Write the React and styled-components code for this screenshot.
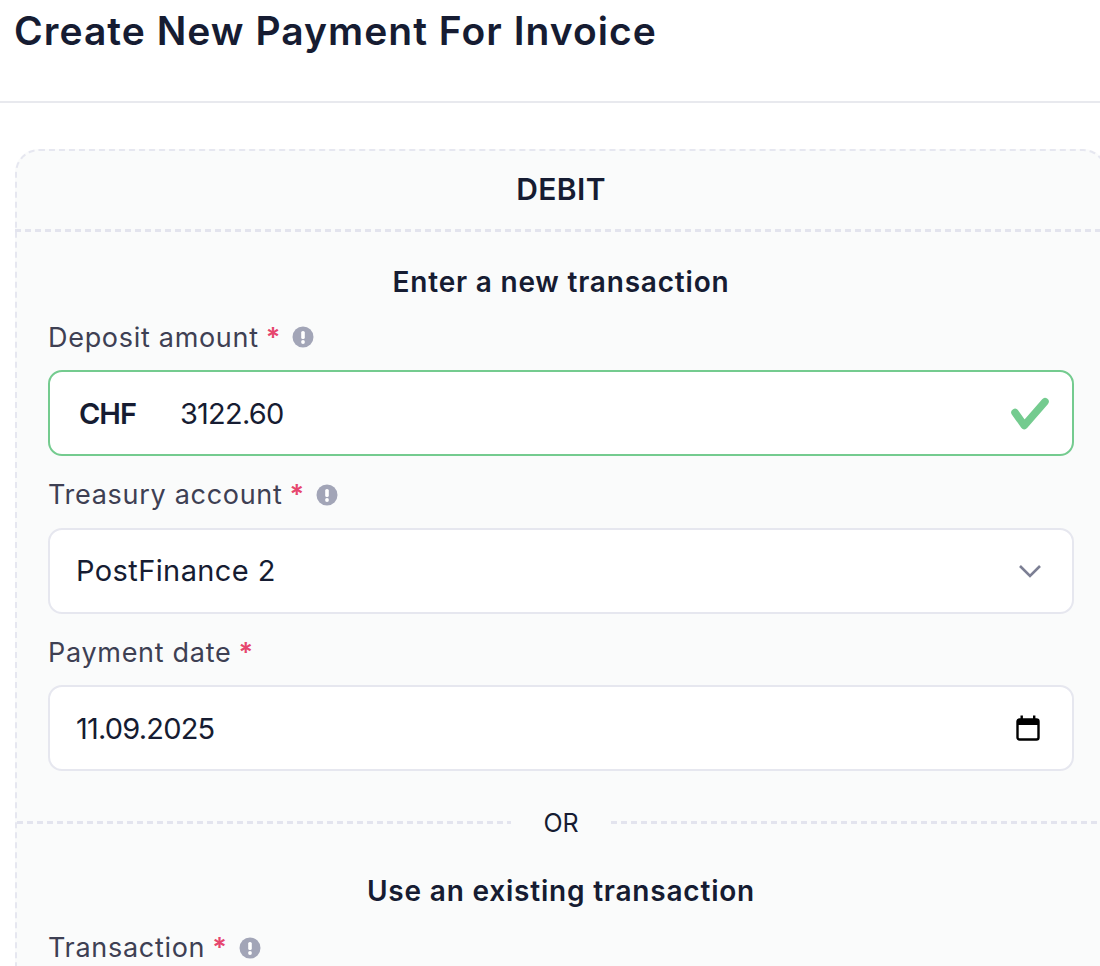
import React from 'react';
import styled, { createGlobalStyle, css } from 'styled-components';

const GlobalStyle = createGlobalStyle`
  html, body {
    margin: 0;
    padding: 0;
    background: #fff;
    overflow: hidden;
  }
  * { box-sizing: border-box; }
`;

const dashes = css`
  height: 3px;
  background: repeating-linear-gradient(90deg, #e3e4ee 0 6px, transparent 6px 10px);
`;

const Page = styled.div`
  width: 1100px;
  height: 966px;
  overflow: hidden;
  font-family: Inter, "Noto Sans", sans-serif;
  color: #161c32;
`;

const Header = styled.header`
  height: 103px;
  padding: 8px 14px 0;
  border-bottom: 2px solid #e8e9ee;
`;

const Title = styled.h1`
  margin: 0;
  font-size: 39px;
  line-height: 46px;
  font-weight: 600;
  letter-spacing: 1.03px;
`;

const Card = styled.section`
  width: 1092px;
  margin: 46px 0 0 15px;
  background: #fafbfb;
  border: 2px dashed #e6e7f0;
  border-radius: 24px;
`;

const CardTitle = styled.h2`
  margin: 0;
  height: 78px;
  padding-bottom: 3px;
  display: flex;
  align-items: center;
  justify-content: center;
  font-size: 30px;
  font-weight: 600;
  letter-spacing: 0.4px;
`;

const Rule = styled.div`
  ${dashes}
  margin-left: -2px;
`;

const Section = styled.div`
  padding: ${(p) => p.$top}px 31px 0;
`;

const SectionTitle = styled.h3`
  margin: 0 0 ${(p) => p.$gap}px;
  height: 40px;
  line-height: 40px;
  text-align: center;
  font-size: 28px;
  font-weight: 600;
  letter-spacing: 0.8px;
`;

const Field = styled.div`
  margin-bottom: 18.5px;
`;

const Label = styled.label`
  height: 40px;
  margin-bottom: 13px;
  display: flex;
  align-items: center;
  font-size: 27px;
  letter-spacing: 0.7px;
  color: #3e4053;
`;

const Required = styled.span`
  margin-left: 7px;
  color: #e6466e;
  font-weight: 600;
`;

const Hint = styled.svg`
  width: 22px;
  height: 22px;
  margin-left: 11px;
`;

const InputBox = styled.div`
  height: 86px;
  padding: 0 26px;
  display: flex;
  align-items: center;
  justify-content: space-between;
  background: #fff;
  border: 2px solid ${(p) => (p.$valid ? '#74cb8f' : '#e6e7ef')};
  border-radius: 14px;
  font-size: 29px;
  color: #161c32;
`;

const Value = styled.span`
  letter-spacing: ${(p) => (p.$digits ? '-0.8px' : '0.4px')};
`;

const Amount = styled.div`
  display: flex;
  align-items: center;
  padding-left: 3px;
`;

const Currency = styled.span`
  width: 101px;
  font-weight: 600;
  letter-spacing: -1px;
`;

const CheckIcon = styled.svg`
  margin-right: -4px;
`;

const ChevronIcon = styled.svg`
  margin-right: 4px;
`;

const CalendarIcon = styled.svg`
  margin-right: 6px;
`;

const Or = styled.div`
  height: 28px;
  margin-top: 37.5px;
  display: flex;
  align-items: center;
  font-size: 25px;
`;

const OrLine = styled.span`
  ${dashes}
  flex: 1;
`;

const OrText = styled.span`
  width: 100px;
  text-align: center;
`;

const InfoIcon = () => (
  <Hint viewBox="0 0 22 22">
    <circle cx="11" cy="11" r="10.5" fill="#a2a5b7" />
    <rect x="9.2" y="5" width="3.6" height="8" rx="1.6" fill="#fff" />
    <circle cx="11" cy="16" r="1.9" fill="#fff" />
  </Hint>
);

const FieldLabel = ({ text, hint }) => (
  <Label>
    {text}
    <Required>*</Required>
    {hint && <InfoIcon />}
  </Label>
);

export default function App() {
  return (
    <Page>
      <GlobalStyle />
      <Header>
        <Title>Create New Payment For Invoice</Title>
      </Header>
      <Card>
        <CardTitle>DEBIT</CardTitle>
        <Rule />
        <Section $top={30}>
          <SectionTitle $gap={15}>Enter a new transaction</SectionTitle>
          <Field>
            <FieldLabel text="Deposit amount" hint />
            <InputBox $valid>
              <Amount>
                <Currency>CHF</Currency>
                <Value $digits>3122.60</Value>
              </Amount>
              <CheckIcon width="40" height="34" viewBox="0 0 40 34" fill="none">
                <path d="M5 16.5 L14.3 29.5 L35 5.7" stroke="#74cb8f" strokeWidth="7.5" strokeLinecap="round" strokeLinejoin="round" />
              </CheckIcon>
            </InputBox>
          </Field>
          <Field>
            <FieldLabel text="Treasury account" hint />
            <InputBox>
              <Value>PostFinance 2</Value>
              <ChevronIcon width="24" height="14" viewBox="0 0 24 14" fill="none">
                <path d="M2 2 L12 12 L22 2" stroke="#7c7f94" strokeWidth="2.6" />
              </ChevronIcon>
            </InputBox>
          </Field>
          <Field>
            <FieldLabel text="Payment date" />
            <InputBox>
              <Value $digits>11.09.2025</Value>
              <CalendarIcon width="24" height="26" viewBox="0 0 24 26" fill="none">
                <rect x="1.5" y="4.5" width="21" height="20" rx="2" stroke="#000" strokeWidth="2.4" />
                <rect x="1.5" y="4" width="21" height="6" fill="#000" />
                <rect x="4.5" y="0.5" width="2.4" height="5" fill="#000" />
                <rect x="17" y="0.5" width="2.4" height="5" fill="#000" />
              </CalendarIcon>
            </InputBox>
          </Field>
        </Section>
        <Or>
          <OrLine />
          <OrText>OR</OrText>
          <OrLine />
        </Or>
        <Section $top={34}>
          <SectionTitle $gap={17}>Use an existing transaction</SectionTitle>
          <Field>
            <FieldLabel text="Transaction" hint />
          </Field>
        </Section>
      </Card>
    </Page>
  );
}
